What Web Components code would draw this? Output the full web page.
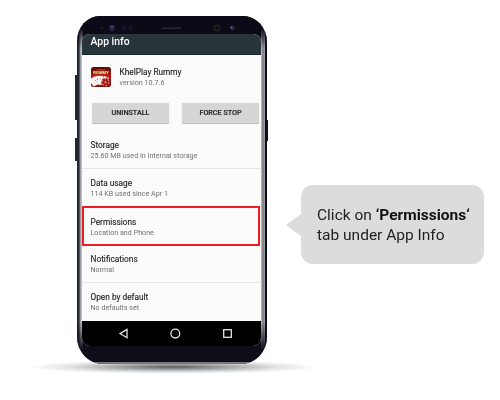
<!DOCTYPE html>
<html lang="en">
<head>
<meta charset="utf-8">
<title>App permissions guide</title>
<style>
html,body{margin:0;width:500px;height:400px;overflow:hidden;background:#fff;font-family:Roboto,"Liberation Sans",sans-serif}
</style>
</head>
<body>
<guide-page></guide-page>
<script>
const define = (name, html) => customElements.define(name, class extends HTMLElement {
  constructor() {
    super();
    this.attachShadow({mode: 'open'}).innerHTML = html;
  }
});

define('app-icon', `
<style>:host{display:block;width:20px;height:20px}svg{display:block}</style>
<svg width="20" height="20" viewBox="0 0 20 20">
  <defs><linearGradient id="g" x2="0" y2="1"><stop offset="0" stop-color="#4b0d08"/><stop offset=".45" stop-color="#b5150f"/><stop offset="1" stop-color="#7c0f0c"/></linearGradient></defs>
  <rect width="20" height="20" rx="2.5" fill="url(#g)"/>
  <path d="M1 10L6 2h8l5 8z" fill="#c42015"/>
  <rect x="1" y="3.4" width="18" height="3.8" fill="#7d170b"/>
  <g fill="#fff" stroke="#d8a8a0" stroke-width=".3">
    <rect x="2.3" y="10" width="5.4" height="8" rx=".7" transform="rotate(-38 5 18)"/>
    <rect x="4" y="9.3" width="5.4" height="8.5" rx=".7" transform="rotate(-16 6 18)"/>
    <rect x="6.4" y="9" width="5.4" height="8.7" rx=".7" transform="rotate(3 9 18)"/>
    <rect x="9.3" y="9" width="5.4" height="8.7" rx=".7" transform="rotate(24 11 18)"/>
  </g>
  <path d="M3.6 12.8l1.2 1.4M6 11.4l.6 1.8M9.2 10.8v1.6" stroke="#d33" stroke-width=".8"/>
  <circle cx="14.5" cy="15.2" r="4.2" fill="#a5130f"/>
  <circle cx="14.5" cy="15.2" r="3.4" fill="none" stroke="#f4dcd4" stroke-width=".9" stroke-dasharray="1.6 2"/>
  <circle cx="14.5" cy="15.2" r="1.4" fill="#d9604f"/>
  <text x="2.2" y="6.8" font-family="Roboto,sans-serif" font-size="4" font-weight="900" textLength="15.6" fill="#ffe88a">RUMMY</text>
</svg>`);

define('action-button', `
<style>:host{display:grid;place-items:center;box-sizing:border-box;height:19.5px;border-radius:1px;background:#d6d6d6;box-shadow:0 .3px .8px #bbb;color:#242424;font-size:7.2px;font-weight:500;line-height:1;padding-top:.5px;-webkit-text-stroke:.15px}</style><slot></slot>`);

define('setting-row', `
<style>
:host{display:block;box-sizing:border-box;height:38px;padding:9.3px 0 0 8.5px;border-bottom:1px solid #e6e6e6}
:host([selected]){border:2px solid #ec1c24;width:178px;height:40px;margin:-1px 0;padding:8.5px 0 0 6.5px}
.t{font-size:8.3px;line-height:11px;color:#222;-webkit-text-stroke:.12px}
.s{font-size:7.1px;line-height:9px;color:#707070;letter-spacing:.03px}
</style><div class="t"><slot></slot></div><div class="s"><slot name="sub"></slot></div>`);

define('nav-bar', `
<style>:host{display:block;height:25px;background:#000}svg{display:block}</style>
<svg width="179" height="25" fill="none" stroke="#e4e4e4" stroke-width="1.3">
 <path d="M38 12.6L45 8.5v8.2z"/><circle cx="93.3" cy="12.6" r="4.4"/><rect x="141.7" y="8.7" width="7.6" height="7.6"/>
</svg>`);

define('phone-device', `
<style>
:host{display:block;position:relative;box-sizing:border-box;width:191px;height:348px;padding:17.5px 6px 0 6px}
.body{position:absolute;inset:0 .5px 0 .5px;overflow:hidden;border-radius:23px 24px 26px 26px/25px 26px 27px 27px;
 background:linear-gradient(90deg,#20232c 0,#292d38 2px,#858992 3px,#c3c5ca 4.4px,#898b91 5.5px,#0e0b18 5.6px,#0e0b18 184px,#b1b1b5 184.5px,#77777d 186px,#9b9ba0 187.5px,#0b0a14 188.2px,#11101b 190px)}
.body::before,.body::after{content:"";position:absolute;left:0;right:0}
.body::before{top:0;height:40px;background:#0d0a17;-webkit-mask:linear-gradient(#000 12px,transparent 32px)}
.body::after{bottom:0;height:42px;background:#100d19;border-bottom:2px solid #77777d;box-sizing:border-box;-webkit-mask:linear-gradient(transparent,#000 28px)}
.screen{position:relative;z-index:1;display:flex;flex-direction:column;width:179px;height:312.5px;overflow:hidden;border-radius:8px;background:#fbfbfb}
header{box-sizing:border-box;flex:none;height:21.5px;background:linear-gradient(#28353a,#26363c);border-bottom:1px solid #17242a;color:#fff;font-size:10.4px;font-weight:500;line-height:12px;padding:2.2px 0 0 8.5px}
.app{flex:none;display:flex;gap:9px;height:48px;padding:12px 0 0 8.5px;box-sizing:border-box}
.name{font-size:8.3px;line-height:11px;color:#222;-webkit-text-stroke:.12px}
.ver{font-size:7.1px;line-height:9px;color:#707070;letter-spacing:.05px}
.actions{flex:none;display:grid;grid-template-columns:77px 77px;gap:13px;padding:0 0 0 10px;height:28px}
.rows{flex:none;height:190px}
nav-bar{flex:none}
.sensors{position:absolute;z-index:2;left:0;top:0}
.key{position:absolute;width:2px;background:#252730}
</style>
<div class="key" style="left:-1px;top:59px;height:45px"></div><div class="key" style="left:-1px;top:122px;height:23px"></div><div class="key" style="right:-1px;top:104px;height:21px;background:#0f0e18"></div>
<div class="body"></div>
<svg class="sensors" width="191" height="22"><circle cx="26" cy="12" r="1" fill="#282634"/><circle cx="36" cy="12" r="3" fill="#24234a"/><circle cx="36" cy="10.8" r="1.2" fill="#3d427d"/><circle cx="47.5" cy="12" r="2.3" fill="#18142f"/><circle cx="54.5" cy="12" r="2.3" fill="#18142f"/><path d="M86 12.2h19" stroke="#2f2d35" stroke-width="1.3"/><circle cx="141" cy="12" r="3" fill="#100d15" stroke="#2c292c"/><circle cx="156.5" cy="12.3" r="2.3" fill="#25284b"/><circle cx="155.5" cy="11.3" r="1" fill="#60678b"/></svg>
<div class="screen">
<header>App info</header>
<div class="app"><app-icon></app-icon><div><div class="name">KhelPlay Rummy</div><div class="ver">version 10.7.6</div></div></div>
<div class="actions"><action-button>UNINSTALL</action-button><action-button>FORCE STOP</action-button></div>
<div class="rows">
<setting-row>Storage<span slot="sub">25.60 MB used in Internal storage</span></setting-row>
<setting-row>Data usage<span slot="sub">114 KB used since Apr 1</span></setting-row>
<setting-row selected>Permissions<span slot="sub">Location and Phone</span></setting-row>
<setting-row>Notifications<span slot="sub">Normal</span></setting-row>
<setting-row style="border:0">Open by default<span slot="sub">No defaults set</span></setting-row>
</div>
<nav-bar></nav-bar>
</div>`);

define('callout-bubble', `
<style>
:host{position:relative;display:block;box-sizing:border-box;width:183px;height:79px;border-radius:12px;background:#dcdcdc;color:#222;font-size:15.5px;line-height:19.5px;padding:21px 0 0 16px;white-space:nowrap}
:host::before{content:"";position:absolute;left:-15px;top:29px;border:solid transparent;border-width:11px 15px 11px 0;border-right-color:#dcdcdc}
</style><slot></slot>`);

define('guide-page', `
<style>
:host{display:flex;align-items:flex-start;gap:34px;position:relative;box-sizing:border-box;width:500px;height:400px;padding:16px 0 0 76px;will-change:transform}
.shadow{position:absolute;left:28px;top:360px;width:290px;height:14px;background:radial-gradient(closest-side,#5d6164 0,#a3a6a8 38%,#e2e3e4 72%,#fff0 100%)}
phone-device{flex:none}
callout-bubble{margin-top:169px}
b{font-weight:700;color:#111}
</style>
<div class="shadow"></div>
<phone-device></phone-device>
<callout-bubble><div>Click on <b>‘Permissions‘</b></div><div>tab under App Info</div></callout-bubble>`);
</script>
</body>
</html>
